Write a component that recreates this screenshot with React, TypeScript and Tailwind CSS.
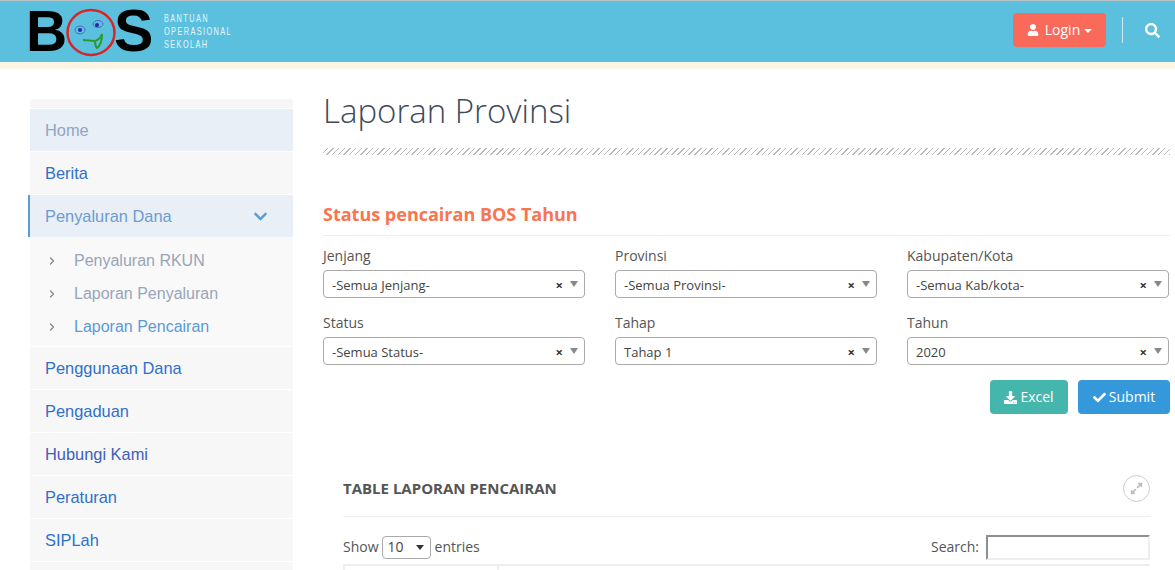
import { ChevronRight } from "lucide-react";
import { FaUser, FaSearch, FaDownload, FaCheck, FaExpandAlt, FaChevronDown } from "react-icons/fa";

const sans = "font-['Open_Sans',sans-serif]";

function Logo() {
  return (
    <div className="flex items-center ml-[30px]">
      <div className="flex items-center h-[61px] font-['Liberation_Sans',sans-serif] font-bold text-black text-[57px] leading-none">
        <span className="-ml-[4px] w-[38px]">B</span>
        <svg width="50" height="52" viewBox="0 0 50 52" className="ml-[2px] mt-[-2px]">
          <ellipse cx="25" cy="27.5" rx="23.5" ry="22.5" fill="none" stroke="#d9252a" strokeWidth="2.5" />
          <ellipse cx="14" cy="25" rx="5" ry="4" fill="none" stroke="#5a62c8" strokeWidth="1" />
          <circle cx="14" cy="25" r="2" fill="#1d2aa8" />
          <ellipse cx="32" cy="19" rx="5" ry="3.5" fill="none" stroke="#5a62c8" strokeWidth="1" />
          <circle cx="31" cy="20" r="2" fill="#1d2aa8" />
          <path d="M17 35 L29 36 C32 35 35 32 36 29 C36 36 34 41 31 43 C29 41 29 38 29 36" fill="none" stroke="#2d9a2d" strokeWidth="2" />
        </svg>
        <span className="w-[42px] ml-[-2px] text-[59px]">S</span>
      </div>
      <div className="font-['Liberation_Sans',sans-serif] ml-[8px] mt-[-1px] text-[10.5px] leading-[13px] tracking-[2px] text-[#e8f7fb] origin-left scale-x-[0.7]">
        <div>BANTUAN</div>
        <div>OPERASIONAL</div>
        <div>SEKOLAH</div>
      </div>
    </div>
  );
}

function Header() {
  return (
    <header>
      <div className="h-[62px] bg-[#5bc0de] border-t border-[#b9c4c8] flex items-center justify-between">
        <Logo />
        <div className="flex items-center mr-[15px] -mt-[3px]">
          <button className={`${sans} h-[34px] w-[93px] bg-[#f96a5b] rounded flex items-center justify-center text-white text-sm`}>
            <FaUser className="w-[12px] h-[12px] mr-[6px]" />
            Login
            <span className="ml-[4px] mt-[1px] border-x-[4px] border-x-transparent border-t-[4px] border-t-white" />
          </button>
          <div className="ml-[16px] w-px h-[26px] bg-[#cfe9f1]" />
          <FaSearch className="ml-[22px] w-[15px] h-[15px] text-white" />
        </div>
      </div>
      <div className="h-[7px] bg-[#fbf5e3]" />
    </header>
  );
}

function NavItem({ label, color = "text-[#2f6fcb]" }: { label: string; color?: string }) {
  return (
    <a className={`h-[42px] flex items-center pl-[15px] text-[16.4px] bg-[#f7f7f7] ${color}`}>{label}</a>
  );
}

function Sidebar() {
  const subs = [
    { label: "Penyaluran RKUN", color: "text-[#98a5b8]" },
    { label: "Laporan Penyaluran", color: "text-[#98a5b8]" },
    { label: "Laporan Pencairan", color: "text-[#5a9bd5]" },
  ];
  return (
    <aside className="w-[263px] ml-[30px] shrink-0 font-['Liberation_Sans',sans-serif] flex flex-col gap-px">
      <div className="h-[9px] bg-[#f6f6f6] rounded-t" />
      <a className="h-[42px] flex items-center pl-[15px] text-[16.4px] bg-[#e8eff7] text-[#8fa6c4]">Home</a>
      <NavItem label="Berita" />
      <div className="relative h-[42px] flex items-center justify-between pl-[15px] pr-[25px] text-[16.4px] bg-[#e8eff7] text-[#6e9bcf]">
        <span className="absolute left-[-2px] top-0 bottom-0 w-[2px] bg-[#5a9bd5]" />
        Penyaluran Dana
        <FaChevronDown className="w-[15px] h-[15px] text-[#5a9bd5]" />
      </div>
      <div className="bg-[#f9f9f9] pt-[7px] pb-[3px] -mt-px">
        {subs.map((s) => (
          <div key={s.label} className="h-[33px] flex items-center pl-[16px]">
            <ChevronRight className="w-[12px] h-[12px] text-[#8c8479]" strokeWidth={2.5} />
            <span className={`ml-[16px] text-base ${s.color}`}>{s.label}</span>
          </div>
        ))}
      </div>
      <NavItem label="Penggunaan Dana" />
      <NavItem label="Pengaduan" />
      <NavItem label="Hubungi Kami" color="text-[#3b5fc0]" />
      <NavItem label="Peraturan" />
      <NavItem label="SIPLah" />
      <div className="h-[20px] bg-[#f7f7f7]" />
    </aside>
  );
}

function Field({ label, value }: { label: string; value: string }) {
  return (
    <div>
      <div className="h-[24px] leading-[24px] text-sm text-[#555]">{label}</div>
      <div className="mt-[2px] h-[28px] bg-white border border-[#aaa] rounded flex items-center pl-[8px] pr-[6px] text-[13px] text-[#444]">
        <span className="flex-1 pt-[4px]">{value}</span>
        <span className="mt-[2px] text-[13px] font-bold text-[#333] leading-none">×</span>
        <span className="ml-[7px] border-x-[4px] border-x-transparent border-t-[6px] border-t-[#888]" />
      </div>
    </div>
  );
}

export default function App() {
  return (
    <div className="h-[570px] w-[1175px] overflow-hidden bg-white">
      <Header />
      <div className="flex pt-[30px]">
        <Sidebar />
        <main className={`${sans} ml-[30px] w-[847px] shrink-0 text-[#555]`}>
          <h1 className="text-[33px] font-light leading-[44px] mt-[-10px] text-[#3d4a5c]">Laporan Provinsi</h1>
          <div className="mt-[15px] h-[7px] bg-[repeating-linear-gradient(135deg,transparent_0,transparent_3px,#bbb_3px,#bbb_4px)]" />
          <h2 className="mt-[47px] text-lg font-bold leading-[24px] text-[#f9744f]">Status pencairan BOS Tahun</h2>
          <div className="mt-[9px] h-px bg-[#eeeeee]" />
          <div className="mt-[8px] grid grid-cols-3 gap-x-[30px] gap-y-[13px] w-[846px]">
            <Field label="Jenjang" value="-Semua Jenjang-" />
            <Field label="Provinsi" value="-Semua Provinsi-" />
            <Field label="Kabupaten/Kota" value="-Semua Kab/kota-" />
            <Field label="Status" value="-Semua Status-" />
            <Field label="Tahap" value="Tahap 1" />
            <Field label="Tahun" value="2020" />
          </div>
          <div className="mt-[15px] flex justify-end gap-[10px]">
            <button className="h-[34px] w-[78px] bg-[#45b6ab] rounded text-white text-sm flex items-center justify-center gap-[3px]">
              <FaDownload className="w-[13px] h-[13px]" />
              Excel
            </button>
            <button className="h-[34px] w-[92px] bg-[#3498db] rounded text-white text-sm flex items-center justify-center gap-[3px]">
              <FaCheck className="w-[13px] h-[13px]" />
              Submit
            </button>
          </div>
          <section className="mt-[60px] mx-[20px]">
            <div className="flex items-center justify-between h-[28px]">
              <h3 className="text-[15px] font-bold text-[#555]">TABLE LAPORAN PENCAIRAN</h3>
              <span className="w-[27px] h-[27px] rounded-full border border-[#ccc] flex items-center justify-center text-[#bbb]">
                <FaExpandAlt className="w-[13px] h-[13px]" />
              </span>
            </div>
            <div className="mt-[14px] h-px bg-[#eeeeee]" />
            <div className="mt-[18px] flex items-center justify-between h-[24px] text-sm">
              <div className="flex items-center">
                Show
                <span className="ml-[3px] mr-[4px] w-[49px] h-[23px] border border-[#aaa] rounded-sm flex items-center justify-between pl-[5px] pr-[6px] text-[#444]">
                  10
                  <span className="border-x-[4px] border-x-transparent border-t-[5px] border-t-[#333]" />
                </span>
                entries
              </div>
              <div className="flex items-center">
                Search:
                <input className="ml-[7px] w-[164px] h-[25px] border-2 border-t-[#8f8f8f] border-l-[#8f8f8f] border-r-[#eee] border-b-[#eee]" />
              </div>
            </div>
            <div className="mt-[5px] flex h-[20px] border-t-2 border-[#eee]">
              <div className="w-[156px] border-x-2 border-[#eee]" />
              <div className="flex-1" />
            </div>
          </section>
        </main>
      </div>
    </div>
  );
}
